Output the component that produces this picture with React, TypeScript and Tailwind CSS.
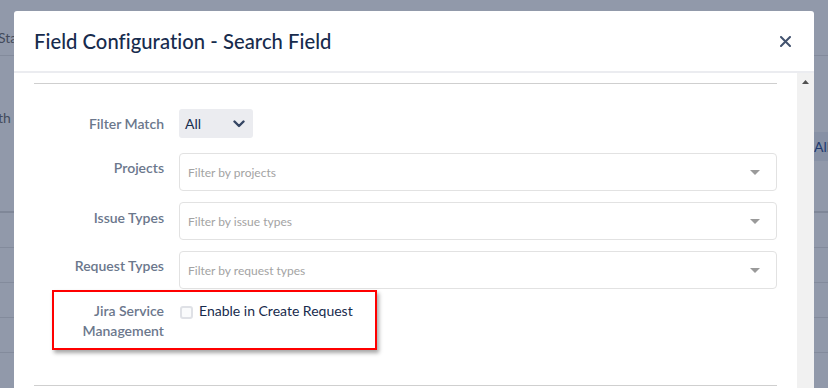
import React from "react";

const font = { fontFamily: 'Lato, "Liberation Sans", sans-serif' };

function Caret() {
  return (
    <svg width="10" height="5" viewBox="0 0 10 5" className="shrink-0">
      <path d="M0 0 L10 0 L5 5 Z" fill="#9a9a9a" />
    </svg>
  );
}

function FilterInput({ placeholder }: { placeholder: string }) {
  return (
    <div className="ml-[15px] flex-1 h-[38px] border border-[#e2e2e2] rounded-[4px] flex items-center justify-between pl-[8px] pr-[16px]">
      <span className="text-[12px] text-[#a3a3a3] pt-[1px]">{placeholder}</span>
      <Caret />
    </div>
  );
}

function Label({ children, className = "" }: { children: React.ReactNode; className?: string }) {
  return (
    <div className={`w-[130px] shrink-0 text-right text-[14px] leading-[20px] font-semibold text-[#6b778c] ${className}`}>
      {children}
    </div>
  );
}

export default function App() {
  return (
    <div className="relative w-[828px] h-[388px] overflow-hidden bg-[#9199aa]" style={font}>
      {/* page behind the blanket */}
      <div className="flex flex-col">
        <div className="h-[56px] border-b border-[#838b9c] pt-[28px] -ml-[2px] text-[14px] leading-[20px] text-[#434b5c]">Sta</div>
        <div className="h-[157px] border-b-2 border-[#7f8798] flex justify-between">
          <div className="mt-[52px] -ml-[2px] text-[14px] leading-[20px] text-[#434b5c]">th</div>
          <div className="mt-[76px] h-[29px] w-[31px] bg-[#8791a5] pl-[17px] flex items-center text-[14px] text-[#1e3a70]">All</div>
        </div>
        <div className="h-[35px] border-b border-[#838b9c]" />
        <div className="h-[35px] border-b border-[#838b9c]" />
        <div className="h-[35px] border-b border-[#838b9c]" />
        <div className="h-[35px] border-b border-[#838b9c]" />
      </div>

      {/* modal */}
      <div className="absolute left-[14px] top-[11px] w-[800px] h-[400px] bg-white rounded-t-[3px] flex flex-col">
        <div className="h-[60px] shrink-0 flex items-center justify-between pl-[20px] pr-[23px]">
          <h1 className="text-[20.2px] tracking-[0.05px] leading-[24px] font-medium text-[#172b4d]">Field Configuration - Search Field</h1>
          <svg width="11" height="11" viewBox="0 0 11 11">
            <path d="M1 1 L10 10 M10 1 L1 10" stroke="#42526e" strokeWidth="2" strokeLinecap="round" />
          </svg>
        </div>
        <div className="h-[2px] shrink-0 bg-[#ebecf0]" />
        <div className="flex-1 flex">
          <div className="flex-1 px-[20px] pt-[10px]">
            <div className="border-t border-[#cfcfcf]" />
            <div className="mt-[25px] flex flex-col">
              <div className="flex items-center h-[29px]">
                <Label>Filter Match</Label>
                <div className="ml-[15px] w-[74px] h-[29px] bg-[#ebecf0] rounded-[3px] flex items-center justify-between pl-[6px] pr-[8px]">
                  <span className="text-[14px] text-[#172b4d]">All</span>
                  <svg width="12" height="8" viewBox="0 0 12 8">
                    <path d="M1.5 1.5 L6 6 L10.5 1.5" fill="none" stroke="#344563" strokeWidth="2.4" strokeLinecap="round" strokeLinejoin="round" />
                  </svg>
                </div>
              </div>
              <div className="mt-[15px] flex items-start">
                <Label className="pt-[5px]">Projects</Label>
                <FilterInput placeholder="Filter by projects" />
              </div>
              <div className="mt-[11px] flex items-start">
                <Label className="pt-[6px]">Issue Types</Label>
                <FilterInput placeholder="Filter by issue types" />
              </div>
              <div className="mt-[11px] flex items-start">
                <Label className="pt-[5px]">Request Types</Label>
                <FilterInput placeholder="Filter by request types" />
              </div>
              <div className="mt-[11px] flex items-start">
                <Label className="pt-[1px] leading-[20.5px]">
                  Jira Service
                  <br />
                  Management
                </Label>
                <div className="ml-[16px] flex items-start">
                  <div className="mt-[6px] w-[13px] h-[13px] rounded-[3px] border-2 border-[#dfe1e6] bg-[#fafbfc]" />
                  <span className="ml-[6px] pt-[1px] text-[14px] leading-[20px] text-[#172b4d]">Enable in Create Request</span>
                </div>
              </div>
            </div>
            <div className="mt-[44px] border-t border-[#cfcfcf]" />
          </div>
          <div className="w-[17px] shrink-0 bg-[#f1f1f1] flex justify-center pt-[7px]">
            <svg width="7" height="4" viewBox="0 0 7 4">
              <path d="M0 4 L3.5 0 L7 4 Z" fill="#505050" />
            </svg>
          </div>
        </div>
        {/* annotation */}
        <div className="absolute left-[38px] top-[279px] w-[325px] h-[60px] border-2 border-[#ff0000] shadow-[2px_3px_4px_rgba(0,0,0,0.35)]" />
      </div>
    </div>
  );
}
